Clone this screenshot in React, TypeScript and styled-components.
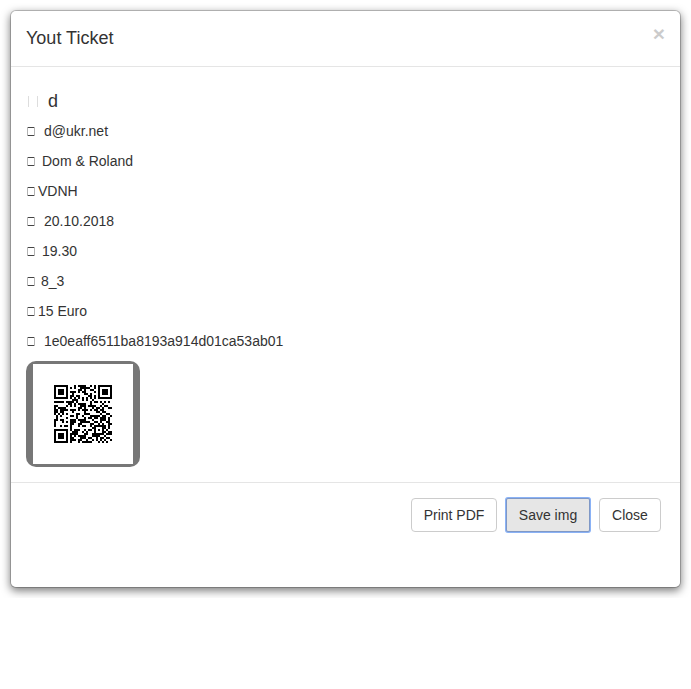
import React from "react";
import styled, { createGlobalStyle } from "styled-components";

const GlobalStyle = createGlobalStyle`
  * { box-sizing: border-box; }
  body {
    margin: 0;
    background: #fff;
    color: #333;
    font: 14px/20px "Liberation Sans", Arial, sans-serif;
  }
`;

const Modal = styled.div`
  margin: 10px;
  height: 578px;
  display: flex;
  flex-direction: column;
  background: #fff;
  background-clip: padding-box;
  border: 1px solid rgba(0, 0, 0, 0.2);
  border-radius: 6px;
  box-shadow: 0 3px 9px rgba(0, 0, 0, 0.5);
`;

const Header = styled.header`
  height: 56px;
  padding: 14px 15px 15px;
  display: flex;
  justify-content: space-between;
  align-items: flex-start;
  border-bottom: 1px solid #e5e5e5;
`;

const Title = styled.h4`
  margin: 0;
  font-size: 18px;
  font-weight: 500;
  line-height: 26px;
`;

const Dismiss = styled.button`
  padding: 0;
  border: 0;
  background: transparent;
  color: #000;
  opacity: 0.2;
  font: bold 21px/18px "Liberation Sans", Arial, sans-serif;
`;

const Body = styled.div`
  height: 415px;
  padding: 24px 15px 15px;
`;

const Name = styled.h4`
  margin: 0 0 10px;
  display: flex;
  align-items: center;
  height: 20px;
  font-size: 18px;
  font-weight: 500;
  line-height: 20px;
`;

const NameMark = styled.span`
  width: 10px;
  height: 11px;
  margin: 0 10px 0 2px;
  border: solid #ddd;
  border-width: 0 1px;
`;

const Line = styled.p<{ $gap: number }>`
  display: flex;
  align-items: center;
  gap: ${(p) => p.$gap}px;
  height: 20px;
  margin: 0 0 10px;
`;

const Mark = styled.span`
  width: 8px;
  height: 9px;
  margin-left: 1px;
  background: linear-gradient(#444, #444) top / 100% 1px no-repeat,
    linear-gradient(#444, #444) bottom / 100% 1px no-repeat;
  border: solid #b4b4b4;
  border-width: 0 1px;
`;

const CodeFrame = styled.div`
  width: 114px;
  height: 106px;
  padding: 3px 7px;
  background: #777;
  border-radius: 10px;
`;

const CodePaper = styled.div`
  width: 100px;
  height: 100px;
  display: grid;
  place-items: center;
  background: #fff;
`;

const Footer = styled.footer`
  display: flex;
  justify-content: flex-end;
  gap: 9px;
  padding: 15px 19px 15px 15px;
  border-top: 1px solid #e5e5e5;
`;

const Button = styled.button<{ $width: number; $focused?: boolean }>`
  width: ${(p) => p.$width}px;
  height: 34px;
  padding: 0;
  border: 1px solid ${(p) => (p.$focused ? "#7f98c6" : "#ccc")};
  border-radius: ${(p) => (p.$focused ? 2 : 4)}px;
  background: ${(p) => (p.$focused ? "#e6e6e6" : "#fff")};
  box-shadow: ${(p) => (p.$focused ? "0 0 0 1px #8ab2f6" : "none")};
  color: #333;
  font: inherit;
  white-space: nowrap;
`;

// Version 3, level L: one block of 55 data and 15 correction bytes.
const SIZE = 29;
const DATA_BYTES = 55;
const EC_BYTES = 15;
const MASK = 2;

function multiply(a: number, b: number) {
  let z = 0;
  for (let i = 7; i >= 0; i--) {
    z = (z << 1) ^ ((z >>> 7) * 0x11d);
    z ^= ((b >>> i) & 1) * a;
  }
  return z;
}

function correction(data: number[]) {
  const divisor: number[] = new Array(EC_BYTES).fill(0);
  divisor[EC_BYTES - 1] = 1;
  let root = 1;
  for (let i = 0; i < EC_BYTES; i++) {
    for (let j = 0; j < EC_BYTES; j++) {
      divisor[j] = multiply(divisor[j], root) ^ (divisor[j + 1] ?? 0);
    }
    root = multiply(root, 2);
  }
  const rest: number[] = new Array(EC_BYTES).fill(0);
  for (const byte of data) {
    const factor = byte ^ rest.shift()!;
    rest.push(0);
    divisor.forEach((d, i) => (rest[i] ^= multiply(d, factor)));
  }
  return rest;
}

function encode(text: string) {
  const bits: number[] = [];
  const push = (value: number, count: number) => {
    for (let i = count - 1; i >= 0; i--) bits.push((value >>> i) & 1);
  };
  // UTF-8 charset designator, then the byte segment.
  push(7, 4);
  push(26, 8);
  push(4, 4);
  push(text.length, 8);
  for (const ch of text) push(ch.charCodeAt(0), 8);
  push(0, 4);
  while (bits.length % 8) bits.push(0);
  const bytes: number[] = [];
  for (let i = 0; i < bits.length; i += 8) {
    bytes.push(parseInt(bits.slice(i, i + 8).join(""), 2));
  }
  for (let pad = 0xec; bytes.length < DATA_BYTES; pad ^= 0xec ^ 0x11) bytes.push(pad);
  return bytes.concat(correction(bytes));
}

function buildCode(text: string) {
  const grid: (boolean | null)[][] = Array.from({ length: SIZE }, () =>
    new Array(SIZE).fill(null)
  );
  const finder = (row: number, col: number) => {
    for (let y = -4; y <= 4; y++)
      for (let x = -4; x <= 4; x++) {
        const r = row + y;
        const c = col + x;
        const d = Math.max(Math.abs(x), Math.abs(y));
        if (r >= 0 && r < SIZE && c >= 0 && c < SIZE) grid[r][c] = d !== 2 && d !== 4;
      }
  };
  for (let i = 0; i < SIZE; i++) grid[6][i] = grid[i][6] = i % 2 === 0;
  finder(3, 3);
  finder(3, SIZE - 4);
  finder(SIZE - 4, 3);
  for (let y = -2; y <= 2; y++)
    for (let x = -2; x <= 2; x++)
      grid[22 + y][22 + x] = Math.max(Math.abs(x), Math.abs(y)) !== 1;

  const info = 8 | MASK;
  let rem = info;
  for (let i = 0; i < 10; i++) rem = (rem << 1) ^ ((rem >>> 9) * 0x537);
  const format = ((info << 10) | rem) ^ 0x5412;
  const bit = (i: number) => ((format >>> i) & 1) === 1;
  for (let i = 0; i <= 5; i++) grid[i][8] = bit(i);
  grid[7][8] = bit(6);
  grid[8][8] = bit(7);
  grid[8][7] = bit(8);
  for (let i = 9; i < 15; i++) grid[8][14 - i] = bit(i);
  for (let i = 0; i < 8; i++) grid[8][SIZE - 1 - i] = bit(i);
  for (let i = 8; i < 15; i++) grid[SIZE - 15 + i][8] = bit(i);
  grid[SIZE - 8][8] = true;

  const words = encode(text);
  let n = 0;
  for (let right = SIZE - 1; right >= 1; right -= 2) {
    if (right === 6) right = 5;
    for (let v = 0; v < SIZE; v++)
      for (let j = 0; j < 2; j++) {
        const c = right - j;
        const r = ((right + 1) & 2) === 0 ? SIZE - 1 - v : v;
        if (grid[r][c] !== null) continue;
        const on = (((words[n >>> 3] ?? 0) >>> (7 - (n & 7))) & 1) === 1;
        grid[r][c] = on !== (c % 3 === 0);
        n++;
      }
  }
  return grid as boolean[][];
}

function QrCode({ text }: { text: string }) {
  const path = buildCode(text)
    .flatMap((row, r) => row.map((on, c) => (on ? `M${c} ${r}h1v1h-1z` : "")))
    .join("");
  return (
    <svg width="58" height="58" viewBox={`0 0 ${SIZE} ${SIZE}`} shapeRendering="crispEdges">
      <path d={path} />
    </svg>
  );
}

const TICKET = "1e0eaff6511ba8193a914d01ca53ab01";

const LINES = [
  { text: "d@ukr.net", gap: 9 },
  { text: "Dom & Roland", gap: 7 },
  { text: "VDNH", gap: 3 },
  { text: "20.10.2018", gap: 9 },
  { text: "19.30", gap: 7 },
  { text: "8_3", gap: 6 },
  { text: "15 Euro", gap: 3 },
  { text: TICKET, gap: 9 },
];

export default function App() {
  return (
    <>
      <GlobalStyle />
      <Modal>
        <Header>
          <Title>Yout Ticket</Title>
          <Dismiss aria-label="Close">×</Dismiss>
        </Header>
        <Body>
          <Name>
            <NameMark />d
          </Name>
          {LINES.map((line) => (
            <Line key={line.text} $gap={line.gap}>
              <Mark />
              {line.text}
            </Line>
          ))}
          <CodeFrame>
            <CodePaper>
              <QrCode text={TICKET} />
            </CodePaper>
          </CodeFrame>
        </Body>
        <Footer>
          <Button $width={86}>Print PDF</Button>
          <Button $width={84} $focused>
            Save img
          </Button>
          <Button $width={62}>Close</Button>
        </Footer>
      </Modal>
    </>
  );
}
